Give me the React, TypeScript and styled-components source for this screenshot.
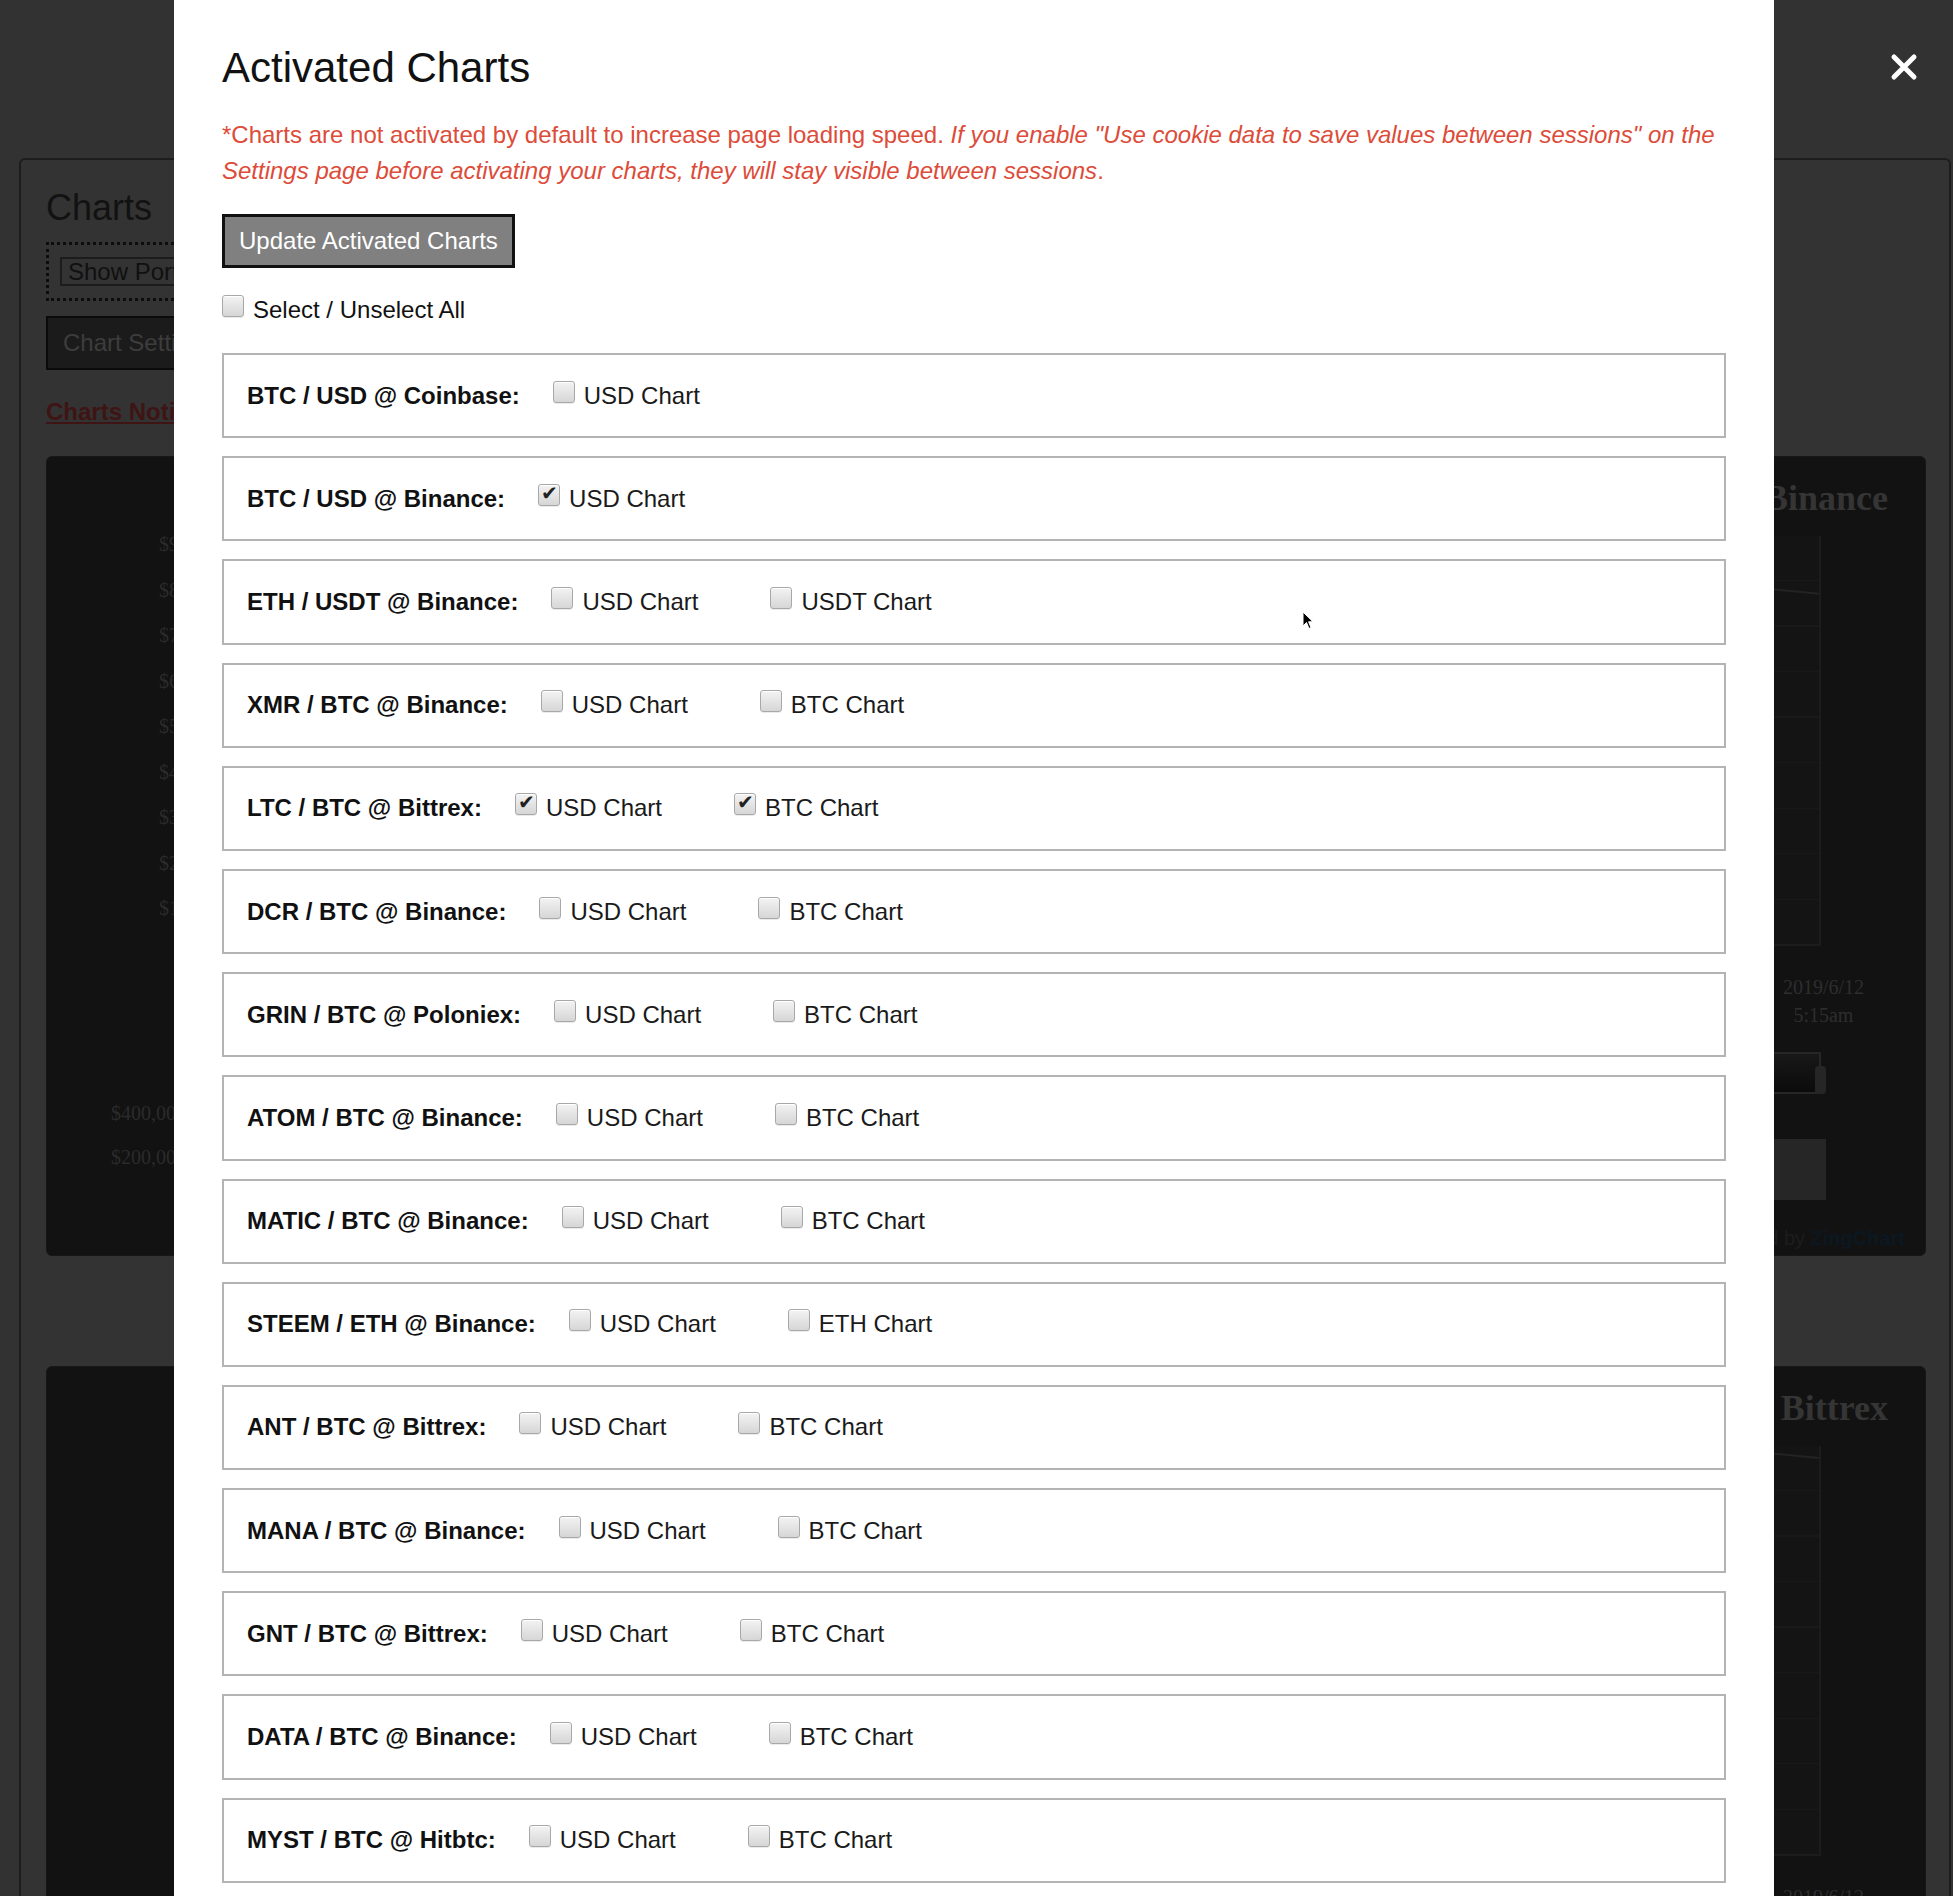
import React from 'react'
import styled, { createGlobalStyle } from 'styled-components'

type ChartOption = { name: string; checked?: boolean }
type Market = { label: string; options: ChartOption[] }

const markets: Market[] = [
    { label: 'BTC / USD @ Coinbase:', options: [{ name: 'USD Chart' }] },
    { label: 'BTC / USD @ Binance:', options: [{ name: 'USD Chart', checked: true }] },
    { label: 'ETH / USDT @ Binance:', options: [{ name: 'USD Chart' }, { name: 'USDT Chart' }] },
    { label: 'XMR / BTC @ Binance:', options: [{ name: 'USD Chart' }, { name: 'BTC Chart' }] },
    { label: 'LTC / BTC @ Bittrex:', options: [{ name: 'USD Chart', checked: true }, { name: 'BTC Chart', checked: true }] },
    { label: 'DCR / BTC @ Binance:', options: [{ name: 'USD Chart' }, { name: 'BTC Chart' }] },
    { label: 'GRIN / BTC @ Poloniex:', options: [{ name: 'USD Chart' }, { name: 'BTC Chart' }] },
    { label: 'ATOM / BTC @ Binance:', options: [{ name: 'USD Chart' }, { name: 'BTC Chart' }] },
    { label: 'MATIC / BTC @ Binance:', options: [{ name: 'USD Chart' }, { name: 'BTC Chart' }] },
    { label: 'STEEM / ETH @ Binance:', options: [{ name: 'USD Chart' }, { name: 'ETH Chart' }] },
    { label: 'ANT / BTC @ Bittrex:', options: [{ name: 'USD Chart' }, { name: 'BTC Chart' }] },
    { label: 'MANA / BTC @ Binance:', options: [{ name: 'USD Chart' }, { name: 'BTC Chart' }] },
    { label: 'GNT / BTC @ Bittrex:', options: [{ name: 'USD Chart' }, { name: 'BTC Chart' }] },
    { label: 'DATA / BTC @ Binance:', options: [{ name: 'USD Chart' }, { name: 'BTC Chart' }] },
    { label: 'MYST / BTC @ Hitbtc:', options: [{ name: 'USD Chart' }, { name: 'BTC Chart' }] },
]

const priceLabels = ['$9,000', '$8,000', '$7,000', '$6,000', '$5,000', '$4,000', '$3,000', '$2,000', '$1,000']

const GlobalStyle = createGlobalStyle`
    html, body {
        margin: 0;
        padding: 0;
    }
    body {
        background: #323232;
        font-family: "Liberation Sans", Arial, sans-serif;
    }
    * {
        box-sizing: border-box;
    }
`

// background page, seen dimmed behind the modal
const Page = styled.div`
    position: relative;
    width: 1953px;
    height: 1896px;
    overflow: hidden;
    padding: 158px 2px 0 19px;
    background: #323232;
`

const Panel = styled.section`
    min-height: 2000px;
    padding: 28px 23px 0 25px;
    border: 2px solid #1d1d1d;
    border-bottom: none;
    border-radius: 6px 6px 0 0;
    background: #333;
`

const PanelTitle = styled.h1`
    margin: 0 0 14px;
    font-size: 36px;
    line-height: 40px;
    font-weight: normal;
    color: #121212;
`

const DottedBox = styled.div`
    width: 560px;
    padding: 12px 11px;
    border: 3px dotted #0d0d0d;
`

const FakeSelect = styled.div`
    width: 260px;
    height: 29px;
    padding: 0 6px;
    border: 2px solid #1c1c1c;
    font-size: 24px;
    line-height: 25px;
    color: #101010;
`

const SettingsButton = styled.div`
    width: 250px;
    margin-top: 15px;
    padding: 12px 15px;
    border: 2px solid #0b0b0b;
    background: #1b1b1b;
    font-size: 24px;
    line-height: 26px;
    color: #3d3d3d;
`

const NoticeLink = styled.a`
    display: block;
    margin-top: 27px;
    font-size: 24px;
    line-height: 30px;
    font-weight: bold;
    color: #3f1414;
    text-decoration: underline;
`

const ChartCard = styled.div<{ $first?: boolean }>`
    height: 800px;
    margin-top: ${p => (p.$first ? '29px' : '110px')};
    padding: 21px 0 0;
    border: 1px solid #171717;
    border-radius: 6px;
    background: #121212;
    font-family: "Liberation Serif", "Times New Roman", serif;
    color: #2c2c2c;
`

const ChartTitle = styled.div`
    padding-right: 37px;
    text-align: right;
    font-size: 36px;
    line-height: 40px;
    font-weight: bold;
    color: #353535;
`

const ChartGrid = styled.div`
    display: grid;
    grid-template-columns: 200px 1fr 104px;
`

const YAxis = styled.div<{ $indent: number; $step: number; $hidden?: boolean }>`
    display: flex;
    flex-direction: column;
    padding-left: ${p => p.$indent}px;
    font-size: 20px;
    line-height: ${p => p.$step}px;
    color: ${p => (p.$hidden ? '#121212' : '#2b2b2b')};
`

const PlotArea = styled.div`
    height: 410px;
    margin-top: 18px;
    border-right: 2px solid #1c1c1c;
    border-bottom: 2px solid #1c1c1c;
    background: repeating-linear-gradient(#141414 0 44px, #191919 44px 45.5px);
`

const XAxis = styled.div`
    display: flex;
    justify-content: flex-end;
    margin-top: 27px;
`

const XLabel = styled.div`
    margin-right: -43px;
    text-align: center;
    font-size: 20px;
    line-height: 28px;
    color: #2e2e2e;
`

const Scroller = styled.div`
    position: relative;
    height: 42px;
    margin-top: 23px;
    border: 2px solid #262626;
    background: linear-gradient(#181818, #0b0b0b);
`

const ScrollHandle = styled.span`
    position: absolute;
    right: -7px;
    top: 12px;
    width: 11px;
    height: 28px;
    border-radius: 4px;
    background: #262626;
`

const VolumeArea = styled.div`
    display: flex;
    align-items: flex-end;
    justify-content: flex-end;
    height: 108px;
`

const VolumeBar = styled.div`
    width: 58px;
    height: 61px;
    margin: 0 -5px 2px 0;
    background: #262626;
`

const PoweredBy = styled.div`
    margin-top: 25px;
    padding-right: 20px;
    text-align: right;
    font-family: "Liberation Sans", Arial, sans-serif;
    font-size: 20px;
    color: #1d1d1d;

    b {
        color: #0c1821;
    }
`

// modal
const Modal = styled.div`
    position: absolute;
    top: 0;
    left: 174px;
    width: 1600px;
    height: 1896px;
    overflow: hidden;
    padding: 45px 48px 0;
    background: #fff;
    color: #111;
`

const Title = styled.h2`
    margin: 0 0 26px;
    font-size: 42px;
    line-height: 46px;
    font-weight: normal;
`

const Note = styled.p`
    margin: 0 0 25px;
    font-size: 24px;
    line-height: 36px;
    color: #dd4b39;
`

const UpdateButton = styled.button`
    display: block;
    padding: 10px 14px;
    border: 3px solid #111;
    background: #808080;
    font-family: inherit;
    font-size: 24px;
    line-height: 28px;
    color: #fff;
`

const Check = styled.input`
    appearance: none;
    position: relative;
    flex: none;
    width: 22px;
    height: 22px;
    margin: 0 9px 0 0;
    border: 1px solid #a8a8a8;
    border-radius: 3px;
    background: linear-gradient(#f3f3f3, #d6d6d6);
    box-shadow: inset 0 1px 0 #fff, 0 1px 0 rgba(0, 0, 0, 0.08);
    transform: translateY(-4px);

    &:checked::after {
        content: '✔';
        position: absolute;
        left: 2px;
        top: -4px;
        font-family: "DejaVu Sans", sans-serif;
        font-size: 20px;
        line-height: 24px;
        color: #222;
    }
`

const SelectAll = styled.label`
    display: flex;
    align-items: center;
    margin: 24px 0 25px;
    font-size: 24px;
    line-height: 36px;
    color: #111;
`

const MarketRow = styled.div`
    display: flex;
    align-items: center;
    margin-bottom: 18px;
    padding: 22.6px 23px;
    border: 2px solid #b4b4b4;
    font-size: 24px;
    line-height: 36px;
`

const MarketLabel = styled.strong`
    margin-right: 33px;
    color: #111;
`

const OptionLabel = styled.label`
    display: inline-flex;
    align-items: center;
    color: #1a1a1a;

    & + & {
        margin-left: 72px;
    }
`

const CloseButton = styled.button`
    position: absolute;
    top: 53px;
    right: 35px;
    width: 28px;
    height: 28px;
    padding: 0;
    border: none;
    background: none;
`

const Cursor = styled.svg`
    position: absolute;
    left: 1302px;
    top: 611px;
`

const PriceChart = ({ title, lineTop, hideAxis }: { title: string; lineTop: number; hideAxis?: boolean }) => (
    <>
        <ChartTitle>{title}</ChartTitle>
        <ChartGrid>
            <YAxis $indent={112} $step={45.5} $hidden={hideAxis} style={{ marginTop: 4 }}>
                {priceLabels.map(l => <span key={l}>{l}</span>)}
            </YAxis>
            <PlotArea>
                <svg width="100%" height="100%" viewBox="0 0 1000 410" preserveAspectRatio="none">
                    <polyline
                        fill="none"
                        stroke="#232323"
                        strokeWidth="2"
                        points={`0,${lineTop + 40} 300,${lineTop + 20} 600,${lineTop + 30} 900,${lineTop + 4} 960,${lineTop} 1000,${lineTop + 6}`}
                    />
                </svg>
            </PlotArea>
            <div />
        </ChartGrid>
        <ChartGrid>
            <div />
            <div>
                <XAxis>
                    <XLabel>2019/6/12<br />5:15am</XLabel>
                </XAxis>
                <Scroller>
                    <ScrollHandle />
                </Scroller>
            </div>
            <div />
        </ChartGrid>
        <ChartGrid>
            <YAxis $indent={64} $step={44} $hidden={hideAxis} style={{ marginTop: -3 }}>
                <span>$400,000</span>
                <span>$200,000</span>
            </YAxis>
            <VolumeArea>
                <VolumeBar />
            </VolumeArea>
            <div />
        </ChartGrid>
        <PoweredBy>Powered by <b>ZingChart</b></PoweredBy>
    </>
)

const App = () => {
    return (
        <Page>
            <GlobalStyle />
            <Panel>
                <PanelTitle>Charts</PanelTitle>
                <DottedBox>
                    <FakeSelect>Show Portfolio Charts</FakeSelect>
                </DottedBox>
                <SettingsButton>Chart Settings</SettingsButton>
                <NoticeLink>Charts Notifications</NoticeLink>
                <ChartCard $first>
                    <PriceChart title="BTC / USD @ Binance" lineTop={52} />
                </ChartCard>
                <ChartCard>
                    <PriceChart title="LTC / BTC @ Bittrex" lineTop={6} hideAxis />
                </ChartCard>
            </Panel>

            <Modal>
                <Title>Activated Charts</Title>
                <Note>
                    *Charts are not activated by default to increase page loading speed.{' '}
                    <em>
                        If you enable "Use cookie data to save values between sessions" on the Settings page
                        before activating your charts, they will stay visible between sessions
                    </em>.
                </Note>
                <UpdateButton>Update Activated Charts</UpdateButton>
                <SelectAll>
                    <Check type="checkbox" readOnly />
                    Select / Unselect All
                </SelectAll>
                {markets.map(m => (
                    <MarketRow key={m.label}>
                        <MarketLabel>{m.label}</MarketLabel>
                        {m.options.map(o => (
                            <OptionLabel key={o.name}>
                                <Check type="checkbox" defaultChecked={o.checked} />
                                {o.name}
                            </OptionLabel>
                        ))}
                    </MarketRow>
                ))}
            </Modal>

            <CloseButton aria-label="close">
                <svg width="28" height="28" viewBox="0 0 28 28">
                    <path d="M4 4 L24 24 M24 4 L4 24" stroke="#fff" strokeWidth="5" strokeLinecap="round" />
                </svg>
            </CloseButton>

            <Cursor width="12" height="19" viewBox="0 0 12 19">
                <path d="M1 1 L1 15 L4.5 11.5 L7 17.5 L9 16.6 L6.6 10.8 L11 10.8 Z" fill="#000" stroke="#fff" strokeWidth="1" />
            </Cursor>
        </Page>
    )
}

export default App
